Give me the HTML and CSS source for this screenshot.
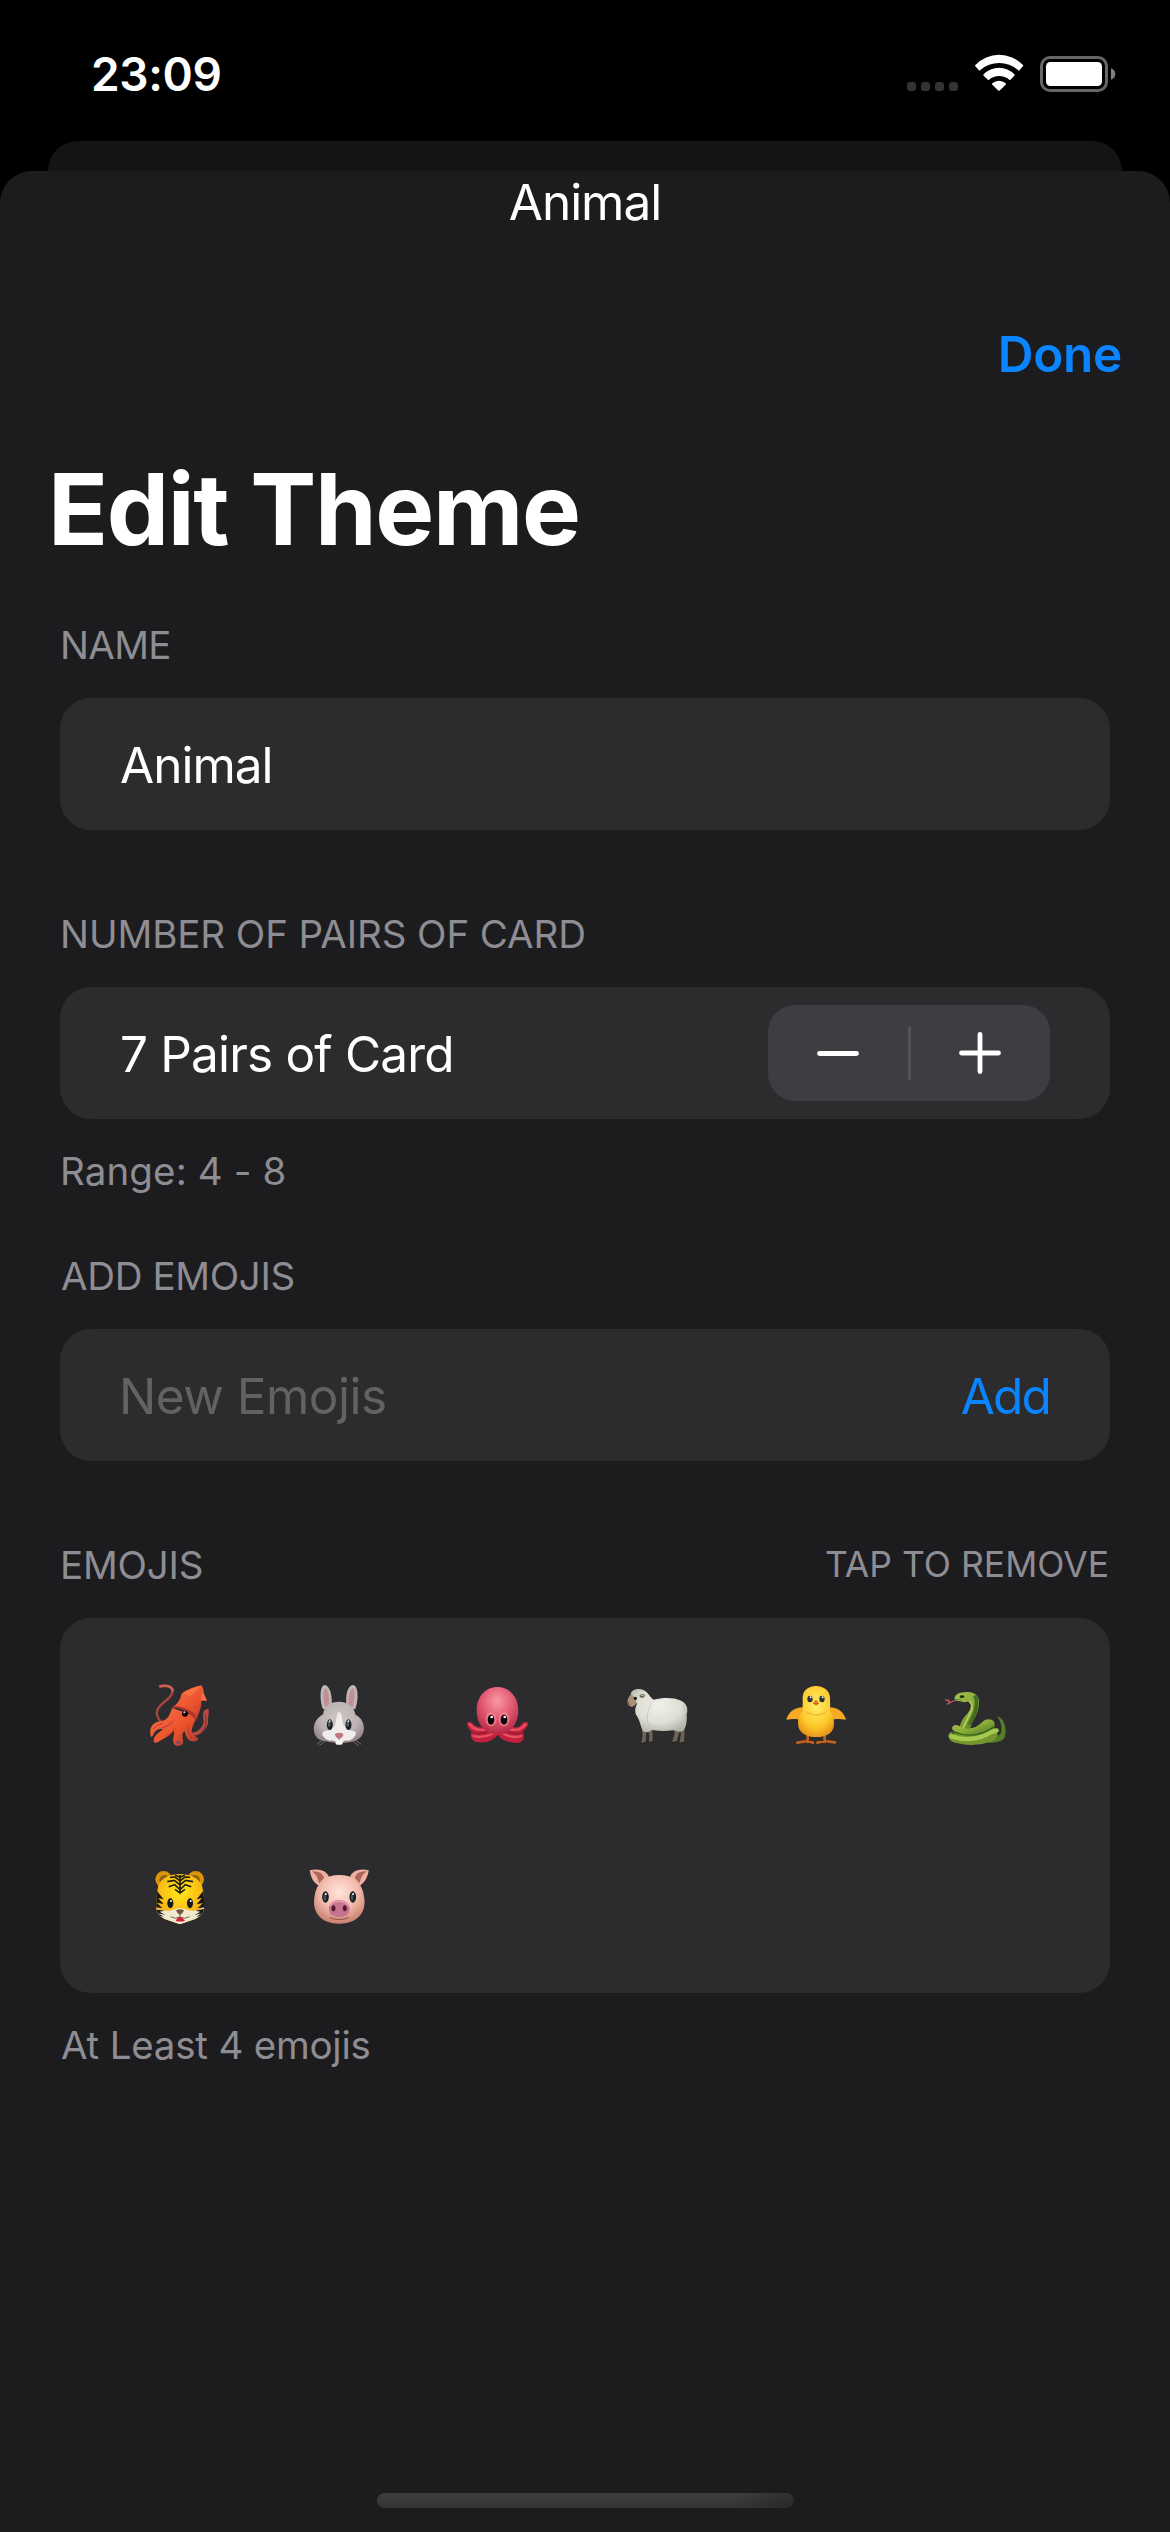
FILE: index.html
```html
<!DOCTYPE html>
<html lang="en">
<head>
<meta charset="utf-8">
<title>Edit Theme</title>
<link rel="stylesheet" href="styles.css">
</head>
<body>
<header class="status">
  <span class="time">23:09</span>
  <div class="indicators">
    <svg class="dots" viewBox="111 72 153 114" fill="#333334"><rect x="111" y="156" width="27" height="27" rx="9"/><rect x="153" y="156" width="27" height="27" rx="9"/><rect x="195" y="156" width="27" height="27" rx="9"/><rect x="237" y="156" width="27" height="27" rx="9"/></svg>
    <svg class="wifi" viewBox="315 72 145 114" fill="#fff"><path d="M316 105A99 99 0 0 1 459 105Q461 107 459 109L449 120Q447 123 444 120A86 86 0 0 0 331 120Q328 123 326 120L316 109Q314 107 316 105ZM341 133A64 64 0 0 1 433 133Q435 135 433 137L423 148Q420 151 418 149A47 47 0 0 0 357 149Q354 151 352 148L341 137Q339 135 341 133ZM367 160A30 30 0 0 1 407 160Q409 162 407 164L390 181Q387 184 384 181L367 164Q365 162 367 160Z"/></svg>
    <svg class="battery" viewBox="510 72 226 114"><rect x="514.5" y="82.5" width="195" height="99" rx="25" fill="none" stroke="#666" stroke-width="9"/><rect x="528" y="96" width="168" height="72" rx="13" fill="#fff"/><path d="M723 115Q736 120 736 132T723 149Z" fill="#7f7f7f"/></svg>
  </div>
</header>
<div class="back-sheet"></div>
<main class="sheet">
  <div class="grabber-title">Animal</div>
  <nav class="nav"><span class="done">Done</span></nav>
  <h1 class="title">Edit Theme</h1>

  <section class="section">
    <div class="label label-name">NAME</div>
    <div class="card row"><span class="value">Animal</span></div>
  </section>

  <section class="section">
    <div class="label label-pairs">NUMBER OF PAIRS OF CARD</div>
    <div class="card row">
      <span class="value pairs">7 Pairs of Card</span>
      <div class="stepper">
        <svg viewBox="0 0 42 42"><path d="M2.5 21.5H39.500"/></svg>
        <i class="divider"></i>
        <svg viewBox="0 0 42 42"><path d="M2.500 21H39.500M21 2.500V39.500"/></svg>
      </div>
    </div>
    <div class="note">Range: 4 - 8</div>
  </section>

  <section class="section after-note">
    <div class="label label-add">ADD EMOJIS</div>
    <div class="card row"><span class="placeholder">New Emojis</span><span class="add">Add</span></div>
  </section>

  <section class="section">
    <div class="label label-split"><span>EMOJIS</span><span class="hint">TAP TO REMOVE</span></div>
    <div class="card emojis">
      <svg viewBox="51 66 198 198" aria-label="squid">
        <defs><linearGradient id="sq" x1="0" y1="0" x2="1" y2="1"><stop offset="0" stop-color="#fa7349"/><stop offset=".6" stop-color="#e9512b"/><stop offset="1" stop-color="#a93b35"/></linearGradient></defs>
        <path d="M92 79C112 73 130 80 127 98C121 121 91 126 82 151C76 165 84 177 97 190" fill="none" stroke="#a9453f" stroke-width="7" stroke-linecap="round"/>
        <path d="M91 79C104 75 126 78 128 91" fill="none" stroke="#d15f51" stroke-width="8" stroke-linecap="round"/>
        <path d="M235 146C216 147 218 166 221 184C220 205 198 220 184 217L186 229C215 226 232 206 235 184C232 174 239 158 235 146Z" fill="#b94a40"/>
        <path d="M224 162q8 12 1 35M214 214q9-5 12-16" stroke="#713236" stroke-width="3" fill="none"/>
        <path d="M127 144C119 162 116 180 93 184C74 185 58 197 61 224C63 236 69 228 72 219C81 205 93 205 99 208C83 220 69 230 71 246C77 254 91 240 112 230C122 224 128 211 132 214C134 230 124 243 134 254Q147 262 158 252C163 242 151 223 163 213C168 221 166 236 183 243Q200 247 205 238C203 230 193 231 187 223C180 208 193 190 200 170Z" fill="url(#sq)"/>
        <path d="M130 184Q116 198 96 204M136 205Q126 222 105 233M173 197Q173 220 185 234M98 190Q79 193 69 208" fill="none" stroke="#b8392b" stroke-width="3"/>
        <path d="M128 142Q151 126 154 102Q176 84 214 76Q222 85 220 99L231 122L214 122C216 147 203 161 201 176Q180 147 128 142Z" fill="url(#sq)"/>
        <path d="M127 141Q170 143 199 184Q201 168 190 158Q161 137 132 137Z" fill="#b5372c"/>
        <path d="M157 98Q184 84 213 77Q194 99 179 109" fill="#ff7a46" opacity=".65"/>
        <path d="M217 91L231 122L213 121Z" fill="#fa6d48"/>
        <circle cx="165" cy="161" r="9" fill="#090909"/><circle cx="163" cy="157" r="3" fill="#e9dfd9"/>
        <path d="M136 247q9-10 19 0l-7 8Z" fill="#874c5a"/>
      </svg>
      <svg viewBox="528.600 66 198 198" aria-label="rabbit">
        <defs><radialGradient id="rb" cx=".5" cy=".4" r=".65"><stop offset="0" stop-color="#d0c8c8"/><stop offset=".6" stop-color="#bcb2b2"/><stop offset="1" stop-color="#8f8184"/></radialGradient></defs>
        <path d="M580 148C570 126 568 76 585 75C602 78 608 110 606 142ZM676 148C686 126 688 76 669 75C651 78 647 110 650 142Z" fill="#bfb7b7"/>
        <path d="M586 140C579 120 579 85 587 85C596 91 600 117 599 137ZM669 140C676 120 677 85 668 85C659 91 655 117 656 137Z" fill="#c38f97"/>
        <path d="M580 163C582 139 602 125 628 125C655 125 673 141 677 164C696 173 706 194 701 215C697 232 681 242 667 245Q628 254 587 244C564 241 554 229 552 210C550 190 564 171 580 163Z" fill="url(#rb)"/>
        <path d="M623 160Q628 153 634 161L640 193Q650 210 670 213Q681 214 677 225Q668 247 628 247Q588 247 578 225Q576 213 589 212Q609 209 616 195Z" fill="#f0eceb"/>
        <ellipse cx="600" cy="194" rx="9" ry="16" fill="#1b2022"/><ellipse cx="656" cy="194" rx="9" ry="16" fill="#1b2022"/><ellipse cx="598" cy="192" rx="4" ry="9" fill="#526064"/><ellipse cx="654" cy="192" rx="4" ry="9" fill="#526064"/><circle cx="600" cy="184" r="3" fill="#e5eaea"/><circle cx="656" cy="184" r="3" fill="#e5eaea"/>
        <path d="M615 222q13-7 26 0q-2 12-13 14q-11-2-13-14" fill="#c27481"/><path d="M628 234v8m0 0q-12 9-24 0m24 0q12 9 24 0" stroke="#8e6970" stroke-width="3" fill="none"/>
        <rect x="617" y="240" width="22" height="14" rx="5" fill="#f6f5f2"/><path d="M579 239l-18 14m24-9l-17 13m108-18l18 14m-24-9l17 13" stroke="#969092" stroke-width="2"/>
      </svg>
      <svg viewBox="76 66 198 198" aria-label="octopus">
        <defs><radialGradient id="oc" cx=".5" cy=".3" r=".7"><stop offset="0" stop-color="#fa99a4"/><stop offset=".5" stop-color="#e25c74"/><stop offset="1" stop-color="#b52745"/></radialGradient></defs>
        <path d="M87 185Q97 185 104 196Q116 205 132 200L218 200Q235 205 244 194Q253 182 264 187Q270 192 260 203L249 216Q256 228 250 240Q242 251 222 248Q193 247 174 225Q154 250 120 247Q96 248 93 225Q93 218 97 216Q84 205 82 192Q82 187 87 185Z" fill="#c2213d"/>
        <path d="M90 192Q106 217 148 207M257 193Q242 216 201 207M102 228Q126 235 158 222M244 228Q222 236 192 222" fill="none" stroke="#e95062" stroke-width="7" stroke-linecap="round"/>
        <path d="M174 81C214 82 237 115 236 154C235 194 211 223 174 224C137 222 112 195 111 155C110 112 135 81 174 81Z" fill="url(#oc)"/>
        <path d="M98 217q18 9 45-2M250 217q-18 9-45-2" stroke="#871832" stroke-width="3" fill="none"/>
        <ellipse cx="154" cy="177" rx="16" ry="22" fill="#ef788a"/><ellipse cx="193" cy="177" rx="16" ry="22" fill="#ef788a"/><ellipse cx="154" cy="179" rx="10" ry="15" fill="#050506"/><ellipse cx="193" cy="179" rx="10" ry="15" fill="#050506"/><circle cx="156" cy="171" r="4" fill="#fff"/><circle cx="195" cy="171" r="4" fill="#fff"/>
      </svg>
      <svg viewBox="554 66 198 198" aria-label="sheep">
        <defs><radialGradient id="sh" cx=".5" cy=".4" r=".65"><stop offset="0" stop-color="#f1f1ea"/><stop offset=".6" stop-color="#deded4"/><stop offset="1" stop-color="#aeb1a5"/></radialGradient></defs>
        <path d="M605 210h13l-2 36-13 5 4-24ZM623 210h13l1 35-12 4 2-22ZM704 205l14 7-9 32-14 5 7-25ZM718 205h15l-2 42-14 4 5-29Z" fill="#6d6455"/><path d="M602 251l14-3m-3 1 24-4m56 4 16-3m4 5 18-4" stroke="#29251f" stroke-width="4"/>
        <path d="M573 103C563 111 559 124 563 134Q572 145 582 137L593 125L587 101Z" fill="#aa9277"/><path d="M566 125q-4 8 3 11" stroke="#66513c" stroke-width="3" fill="none"/>
        <path d="M571 103C573 88 595 84 609 90C625 97 628 112 640 119C666 113 698 111 722 122C738 129 745 146 739 163C740 186 738 207 725 214C713 218 708 211 697 211Q669 216 635 210C625 218 611 220 606 211C600 194 596 175 586 163Q582 145 590 132Q586 110 571 103Z" fill="url(#sh)"/>
        <path d="M635 207Q606 186 633 128M729 137Q742 171 727 207" stroke="#b9bcb0" stroke-width="3" fill="none" opacity=".7"/>
        <path d="M597 106q16-8 17 1q-6 11-15 4" fill="#706856"/><path d="M602 106h9" stroke="#c9bbaa" stroke-width="3"/><ellipse cx="585" cy="115" rx="5" ry="5" fill="#12100d"/>
      </svg>
      <svg viewBox="71 66 198 198" aria-label="chick">
        <defs><radialGradient id="ch" cx=".5" cy=".38" r=".65"><stop offset="0" stop-color="#fff06a"/><stop offset=".65" stop-color="#fdc92b"/><stop offset="1" stop-color="#e89418"/></radialGradient></defs>
        <path d="M142 224v22m-31 2l31-5 16 5M193 224v22m-22 2 22-5 31 4" stroke="#c4601c" stroke-width="8" fill="none" stroke-linecap="round"/>
        <path d="M128 142C101 142 84 158 78 179Q105 175 127 180ZM207 142C234 142 251 158 257 179Q230 175 208 180Z" fill="#f5a925"/>
        <path d="M127 112Q129 80 167 78Q205 80 209 112Q210 139 209 153Q222 168 221 194C220 219 196 232 167 231C138 231 114 218 113 191Q112 167 127 154Z" fill="url(#ch)"/>
        <path d="M133 151q33 22 70 0q-10 16-36 16t-34-16" fill="#eda31f" opacity=".55"/>
        <ellipse cx="149" cy="117" rx="8" ry="10" fill="#293137"/><ellipse cx="185" cy="117" rx="8" ry="10" fill="#293137"/><circle cx="151" cy="112" r="3" fill="#fff"/><circle cx="187" cy="112" r="3" fill="#fff"/><path d="M158 130Q167 109 176 130Q168 144 158 130" fill="#ed851c"/><path d="M159 130h16" stroke="#b4541a" stroke-width="2"/>
      </svg>
      <svg viewBox="549 66 198 198" aria-label="snake">
        <defs><linearGradient id="sn" x1="0" y1="0" x2="1" y2="1"><stop stop-color="#a8c64d"/><stop offset=".5" stop-color="#8aad38"/><stop offset="1" stop-color="#3e6c1d"/></linearGradient></defs>
        <path d="M588 120L572 127L555 118M571 127L560 133M568 126l-4-8" stroke="#b75563" stroke-width="4" fill="none"/>
        <path d="M711 169Q727 171 735 197Q740 223 731 237Q715 250 684 248L690 232Q717 233 724 217Q728 191 711 169Z" fill="#557f26"/>
        <path d="M583 114Q589 98 612 97Q649 91 657 120Q661 151 638 184L631 206L599 203Q603 178 623 160Q639 137 630 123Q613 130 597 123Q586 124 583 114Z" fill="url(#sn)"/>
        <path d="M627 122Q644 137 630 160L609 205" stroke="#b8c865" stroke-width="6" fill="none"/><path d="M644 107Q661 135 629 193" stroke="#416d20" stroke-width="11" fill="none"/>
        <path d="M575 222L693 188L711 215Q719 232 693 245Q640 263 590 249Q567 246 565 228Q566 215 580 216Z" fill="#73972e"/><path d="M576 203Q580 190 600 199Q638 218 670 183Q683 173 700 182Q712 197 693 210Q648 240 594 218Q577 214 576 203Z" fill="url(#sn)"/>
        <path d="M574 229Q628 247 675 226Q694 214 710 211" fill="none" stroke="#a4c94e" stroke-width="13" stroke-linecap="round"/><path d="M579 214Q643 242 704 200" fill="none" stroke="#38661a" stroke-width="4"/><ellipse cx="606" cy="110" rx="7" ry="4" fill="#173016"/><path d="M586 117l20 3" stroke="#557c2c" stroke-width="2"/>
      </svg>
      <svg viewBox="51 72 198 198" aria-label="tiger">
        <defs><radialGradient id="tg" cx=".5" cy=".35" r=".65"><stop offset="0" stop-color="#ffe91a"/><stop offset=".55" stop-color="#fbc216"/><stop offset="1" stop-color="#ef9c13"/></radialGradient><clipPath id="tc"><path d="M85 137Q98 104 150 102Q201 104 216 137Q224 164 222 207Q218 233 180 242L150 253L119 242Q83 233 79 207Q78 164 85 137Z"/></clipPath></defs>
        <circle cx="101" cy="118" r="25" fill="#d99605"/><circle cx="197" cy="118" r="25" fill="#d99605"/><circle cx="104" cy="121" r="16" fill="#905f0a"/><circle cx="194" cy="121" r="16" fill="#905f0a"/>
        <g clip-path="url(#tc)"><path d="M77 97h147v160H77Z" fill="url(#tg)"/><path d="M77 204Q101 218 129 209Q150 199 170 209Q198 218 224 202V258H77Z" fill="#f1e9cf"/>
        <path d="M77 148L101 178L84 174L101 192L80 188L97 204L77 202ZM224 148L200 178L216 174L200 193L219 189L203 205L224 202ZM77 208L103 212L89 215L106 225L84 220L101 230L78 226ZM224 206L197 212L211 215L193 226L214 220L200 230L224 226Z" fill="#171713"/></g>
        <path d="M150 104V163M135 105l15 7 15-7M120 112l15-1 15 12 15-12 15 1M112 125l21-4 17 14 17-14 22 4M116 140l18-6 16 15 16-15 18 6M135 148l15 11 15-11" fill="none" stroke="#252010" stroke-width="5"/>
        <ellipse cx="121" cy="190" rx="9" ry="15" fill="#171a20"/><ellipse cx="180" cy="190" rx="9" ry="15" fill="#171a20"/><circle cx="123" cy="183" r="3" fill="#fff"/><circle cx="182" cy="183" r="3" fill="#fff"/>
        <path d="M138 211Q150 204 162 211Q158 222 150 225Q141 221 138 211Z" fill="#745440"/><path d="M150 223v8q-14 8-28-1m28 1q14 8 28-1" stroke="#756751" stroke-width="3" fill="none"/><path d="M137 242Q144 230 150 230Q158 231 165 242Q151 247 137 242Z" fill="#d61f35"/>
      </svg>
      <svg viewBox="528.600 72 198 198" aria-label="pig">
        <defs><radialGradient id="pg" cx=".5" cy=".35" r=".65"><stop offset="0" stop-color="#ffe5da"/><stop offset=".55" stop-color="#f4bdae"/><stop offset="1" stop-color="#c9816f"/></radialGradient></defs>
        <path d="M540 91Q584 82 598 111L570 140Q542 123 540 91ZM717 91Q674 82 660 111L687 140Q713 123 717 91Z" fill="#edb0a1"/><path d="M546 94Q575 92 583 113L568 130Q562 103 546 94ZM711 94Q682 92 675 113L689 130Q695 103 711 94Z" fill="#a96859"/>
        <path d="M554 171C559 126 588 105 628 105C669 105 698 126 703 171C711 219 682 251 628 251C575 251 546 219 554 171Z" fill="url(#pg)"/>
        <ellipse cx="587" cy="171" rx="10" ry="17" fill="#171d20"/><ellipse cx="669" cy="171" rx="10" ry="17" fill="#171d20"/><ellipse cx="585" cy="172" rx="4" ry="11" fill="#405159"/><ellipse cx="667" cy="172" rx="4" ry="11" fill="#405159"/><circle cx="588" cy="162" r="3" fill="#fff"/><circle cx="670" cy="162" r="3" fill="#fff"/>
        <path d="M597 205Q601 180 629 180Q656 181 660 206Q659 231 628 231Q597 231 597 205Z" fill="#c5748d"/><path d="M601 198Q608 184 629 184Q649 184 656 198" fill="none" stroke="#e59ab0" stroke-width="5"/><ellipse cx="611" cy="205" rx="6" ry="9" fill="#57182e"/><ellipse cx="645" cy="205" rx="6" ry="9" fill="#57182e"/><path d="M600 233q28 11 57 0" fill="none" stroke="#8e4e45" stroke-width="3"/>
      </svg>
    </div>
    <div class="note least">At Least 4 emojis</div>
  </section>
  <div class="home"></div>
</main>
</body>
</html>
```
FILE: styles.css
```css
* { box-sizing: border-box; }
body {
  margin: 0;
  width: 1170px;
  height: 2532px;
  display: flex;
  flex-direction: column;
  overflow: hidden;
  background: #000;
  color: #fff;
  font-family: Inter, "Liberation Sans", sans-serif;
  font-size: 49.5px;
}
svg { display: block; flex: none; }
.status {
  height: 141px;
  flex: none;
  display: flex;
  justify-content: space-between;
  align-items: flex-start;
  padding: 54px 54.5px 0 91px;
}
.time { font-size: 46px; font-weight: 600; line-height: 41px; letter-spacing: -.37px; }
.indicators { display: flex; }
.dots { width: 51px; height: 38px; }
.wifi { width: 48.3px; height: 38px; margin: 0 16.7px 0 17px; }
.battery { width: 75.3px; height: 38px; }
.back-sheet {
  flex: none;
  height: 60px;
  margin: 0 48px -30px;
  border-radius: 30px 30px 0 0;
  background: #141414;
}
.sheet {
  flex: 1;
  position: relative;
  display: flex;
  flex-direction: column;
  background: #1c1c1e;
  border-radius: 32px 32px 0 0;
}
.grabber-title { text-align: center; line-height: 62px; letter-spacing: -1px; }
.nav { display: flex; justify-content: flex-end; padding: 91px 48px 0; line-height: 60px; }
.done { color: #0a84ff; font-weight: 600; letter-spacing: -.3px; }
.title {
  margin: 65px 48px 56px;
  font-size: 99px;
  font-weight: 700;
  line-height: 120px;
  letter-spacing: -1.35px;
}
.section { margin: 0 60px 84px; }
.section:has(.note) { margin-bottom: 65px; }
.label, .note {
  color: #8d8d93;
  font-size: 38.5px;
  line-height: 40px;
}
.label { margin-bottom: 33px; }
.note { margin-top: 32px; letter-spacing: .13px; }
.label-name { letter-spacing: -.7px; }
.label-pairs { letter-spacing: -.08px; }
.label-add { letter-spacing: -.35px; padding-left: 1px; }
.label-split { display: flex; justify-content: space-between; letter-spacing: -.2px; }
.hint { font-size: 35.5px; padding-right: 1px; letter-spacing: 0; }
.least { letter-spacing: -.2px; padding-left: 1px; }
.card { background: #2c2c2e; border-radius: 31px; }
.row {
  height: 132px;
  display: flex;
  justify-content: space-between;
  align-items: center;
  padding: 0 60px;
}
.row > span { padding-top: 2px; }
.value { letter-spacing: -1px; }
.pairs { letter-spacing: -.82px; }
.placeholder { color: #626265; letter-spacing: -.5px; margin-left: -1px; }
.add { color: #0a84ff; letter-spacing: -1.8px; }
.stepper {
  width: 282px;
  height: 96px;
  display: flex;
  align-items: center;
  justify-content: space-between;
  padding: 0 49px 0 49px;
  border-radius: 27px;
  background: #3e3d42;
}
.stepper svg { width: 42px; height: 42px; fill: none; stroke: #fff; stroke-width: 4.8; stroke-linecap: round; }
.divider { width: 3px; height: 54px; border-radius: 2px; background: #545458; }
.emojis {
  height: 375px;
  display: grid;
  grid-template-columns: repeat(6, 159.2px);
  grid-template-rows: 182px 182px;
  place-items: center;
  padding: 6px 0 0 40.4px;
}
.emojis svg { width: 66px; height: 66px; }
.home {
  width: 417px;
  height: 15px;
  margin: auto 0 24px 377px;
  border-radius: 8px;
  background: linear-gradient(90deg, #1c1c1e00 86%, #1c1c1e77), linear-gradient(#3e3e3e, #343434);
}
```
